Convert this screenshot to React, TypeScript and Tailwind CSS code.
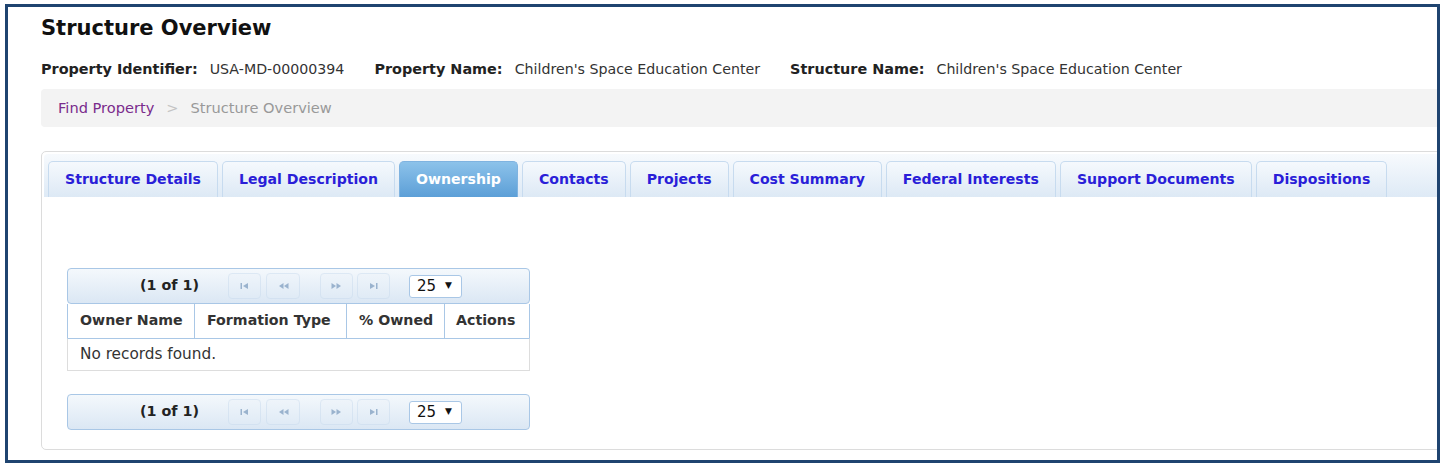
import React from "react";

const tabs = [
  "Structure Details",
  "Legal Description",
  "Ownership",
  "Contacts",
  "Projects",
  "Cost Summary",
  "Federal Interests",
  "Support Documents",
  "Dispositions",
];

function NavIcon({ kind }: { kind: "first" | "prev" | "next" | "last" }) {
  return (
    <svg width="11" height="8" viewBox="0 0 11 8" className="fill-[#4f78a6]">
      {kind === "first" && (
        <>
          <rect x="1.5" y="1" width="1.5" height="6" />
          <path d="M9 1 L4 4 L9 7 Z" />
        </>
      )}
      {kind === "prev" && (
        <>
          <path d="M5.5 1 L1 4 L5.5 7 Z" />
          <path d="M10.5 1 L6 4 L10.5 7 Z" />
        </>
      )}
      {kind === "next" && (
        <>
          <path d="M0.5 1 L5 4 L0.5 7 Z" />
          <path d="M5.5 1 L10 4 L5.5 7 Z" />
        </>
      )}
      {kind === "last" && (
        <>
          <path d="M2 1 L7 4 L2 7 Z" />
          <rect x="8" y="1" width="1.5" height="6" />
        </>
      )}
    </svg>
  );
}

function NavButton({ kind, w }: { kind: "first" | "prev" | "next" | "last"; w: string }) {
  return (
    <div
      className={`${w} h-[26px] rounded-[4px] border border-[#c9dbee] bg-gradient-to-b from-[#eef4fa] to-[#e1ecf7] flex items-center justify-center opacity-50`}
    >
      <NavIcon kind={kind} />
    </div>
  );
}

function Paginator() {
  return (
    <div className="h-[36px] rounded-[4px] border border-[#a9c7e6] bg-gradient-to-b from-[#f4f8fc] to-[#dbe7f4] flex items-center pl-[72px]">
      <span className="font-bold text-[14.3px] text-[#222] w-[88px]">(1 of 1)</span>
      <NavButton kind="first" w="w-[33px]" />
      <div className="ml-[5px]">
        <NavButton kind="prev" w="w-[34px]" />
      </div>
      <div className="ml-[20px]">
        <NavButton kind="next" w="w-[33px]" />
      </div>
      <div className="ml-[4px]">
        <NavButton kind="last" w="w-[33px]" />
      </div>
      <div className="ml-[19px] w-[53px] h-[23px] bg-white border border-[#a9c7e6] rounded-[3px] flex items-center pl-[7px] gap-[9px]">
        <span className="text-[15px] text-[#111]">25</span>
        <span className="text-[9px] text-[#111]">▼</span>
      </div>
    </div>
  );
}

export default function App() {
  return (
    <div className="w-[1444px] h-[470px] bg-white pt-[4px] pl-[5px] font-['DejaVu_Sans',Verdana,sans-serif]">
      <div className="w-[1435px] h-[459px] border-[3px] border-[#1f4470] overflow-hidden pl-[33px]">
        <h1 className="text-[21px] font-bold text-[#111] leading-[28px] mt-[7px]">Structure Overview</h1>

        <div className="flex items-center mt-[18px] leading-[18px]">
          <span className="text-[14.4px] font-bold text-[#222]">Property Identifier:</span>
          <span className="ml-[12px] text-[14.2px] text-[#333]">USA-MD-00000394</span>
          <span className="ml-[30px] text-[14.4px] font-bold text-[#222]">Property Name:</span>
          <span className="ml-[12px] text-[14.2px] text-[#333]">Children's Space Education Center</span>
          <span className="ml-[30px] text-[14.4px] font-bold text-[#222]">Structure Name:</span>
          <span className="ml-[12px] text-[14.2px] text-[#333]">Children's Space Education Center</span>
        </div>

        <div className="mt-[11px] w-[1420px] h-[38px] bg-[#f3f3f3] rounded-[4px] flex items-center pl-[17px] text-[14.6px]">
          <span className="text-[#7a2b8c]">Find Property</span>
          <span className="mx-[12px] text-[#c4c4c4]">&gt;</span>
          <span className="text-[#999]">Structure Overview</span>
        </div>

        <div className="mt-[24px] w-[1420px] h-[299px] border border-[#dcdcdc] rounded-[5px] p-[2px]">
          <div className="h-[43px] rounded-t-[4px] bg-gradient-to-b from-[#f7fafd] to-[#deeaf6] flex items-end pl-[4px] gap-[4px]">
            {tabs.map((t) =>
              t === "Ownership" ? (
                <div
                  key={t}
                  className="h-[36px] px-[16px] rounded-t-[5px] border border-b-0 border-[#7fb3e0] bg-gradient-to-b from-[#8cc2ea] to-[#5c9fd7] flex items-center text-[14.1px] font-bold text-white"
                >
                  {t}
                </div>
              ) : (
                <div
                  key={t}
                  className="h-[36px] px-[16px] rounded-t-[5px] border border-b-0 border-[#c7dbef] bg-gradient-to-b from-[#f5f9fd] to-[#dde9f5] flex items-center text-[14.1px] font-bold text-[#2a1ed8]"
                >
                  {t}
                </div>
              )
            )}
          </div>

          <div className="pl-[23px] pt-[71px]">
            <div className="w-[463px]">
              <Paginator />
              <div className="flex h-[34px] border-x border-[#a9c7e6] bg-white text-[14.2px] font-bold text-[#333]">
                <div className="w-[127px] border-r border-[#a9c7e6] flex items-center pl-[12px]">Owner Name</div>
                <div className="w-[152px] border-r border-[#a9c7e6] flex items-center pl-[12px]">Formation Type</div>
                <div className="w-[98px] border-r border-[#a9c7e6] flex items-center pl-[12px]">% Owned</div>
                <div className="flex-1 flex items-center pl-[11px]">Actions</div>
              </div>
              <div className="h-[33px] border border-[#dddddd] border-t-[#a9c7e6] flex items-center pl-[12px] text-[15.3px] text-[#333]">
                No records found.
              </div>
              <div className="mt-[23px]">
                <Paginator />
              </div>
            </div>
          </div>
        </div>
      </div>
    </div>
  );
}
